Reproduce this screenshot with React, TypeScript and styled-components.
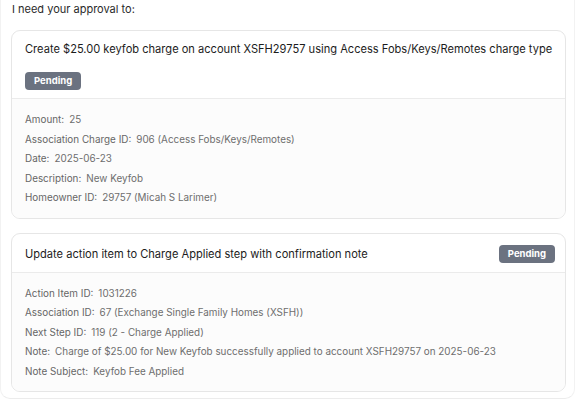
import React from "react";
import styled, { createGlobalStyle } from "styled-components";

const Global = createGlobalStyle`
  html, body { margin: 0; padding: 0; background: #ffffff; }
  body { font-family: Inter, "Noto Sans", sans-serif; color: #1f1f1f; }
`;

const Bubble = styled.div`
  box-sizing: border-box;
  width: 575px;
  height: 399px;
  padding: 1px 10px 0 10px;
  border-bottom: 1px solid #ececec;
  border-left: 1px solid #f2f2f2;
  border-right: 1px solid #f2f2f2;
  border-radius: 0 0 10px 10px;
`;

const Intro = styled.p`
  margin: 0 0 13px 1px;
  font-size: 11px;
  line-height: 16px;
  color: #2a2a2a;
`;

const List = styled.div`
  display: flex;
  flex-direction: column;
  gap: 14px;
`;

const Card = styled.div`
  box-sizing: border-box;
  width: 555px;
  border: 1px solid #e6e6e6;
  border-radius: 9px;
  overflow: hidden;
  background: #ffffff;
`;

const Header = styled.div<{ $stacked?: boolean }>`
  display: flex;
  flex-direction: ${(p) => (p.$stacked ? "column" : "row")};
  align-items: ${(p) => (p.$stacked ? "flex-start" : "center")};
  justify-content: space-between;
  gap: ${(p) => (p.$stacked ? "15px" : "12px")};
  padding: ${(p) => (p.$stacked ? "10px 8px 8px 13px" : "11px 10px 9px 13px")};
  border-bottom: 1px solid #ebebeb;
`;

const Title = styled.div`
  font-size: 11.1px;
  line-height: 16px;
  color: #1c1c1c;
  white-space: nowrap;
`;

const Badge = styled.span`
  display: inline-flex;
  align-items: center;
  box-sizing: border-box;
  height: 18px;
  padding: 0 9px;
  border-radius: 4px;
  background: #6b7280;
  color: #ffffff;
  font-size: 9.5px;
  font-weight: 700;
  line-height: 18px;
`;

const Details = styled.div`
  display: flex;
  flex-direction: column;
  padding: 11px 12px 10px 13px;
  background: #fcfcfc;
`;

const Row = styled.div`
  font-size: 9.9px;
  line-height: 19.5px;
  color: #6e6e6e;
  white-space: nowrap;
`;

const Label = styled.span`
  color: #666666;
  margin-right: 5px;
`;

type Field = [string, string];

const items: { title: string; stacked: boolean; fields: Field[] }[] = [
  {
    title:
      "Create $25.00 keyfob charge on account XSFH29757 using Access Fobs/Keys/Remotes charge type",
    stacked: true,
    fields: [
      ["Amount:", "25"],
      ["Association Charge ID:", "906 (Access Fobs/Keys/Remotes)"],
      ["Date:", "2025-06-23"],
      ["Description:", "New Keyfob"],
      ["Homeowner ID:", "29757 (Micah S Larimer)"],
    ],
  },
  {
    title: "Update action item to Charge Applied step with confirmation note",
    stacked: false,
    fields: [
      ["Action Item ID:", "1031226"],
      ["Association ID:", "67 (Exchange Single Family Homes (XSFH))"],
      ["Next Step ID:", "119 (2 - Charge Applied)"],
      [
        "Note:",
        "Charge of $25.00 for New Keyfob successfully applied to account XSFH29757 on 2025-06-23",
      ],
      ["Note Subject:", "Keyfob Fee Applied"],
    ],
  },
];

export default function App() {
  return (
    <>
      <Global />
      <Bubble>
        <Intro>I need your approval to:</Intro>
        <List>
          {items.map((it) => (
            <Card key={it.title}>
              <Header $stacked={it.stacked}>
                <Title>{it.title}</Title>
                <Badge>Pending</Badge>
              </Header>
              <Details>
                {it.fields.map(([k, v]) => (
                  <Row key={k}>
                    <Label>{k}</Label>
                    {v}
                  </Row>
                ))}
              </Details>
            </Card>
          ))}
        </List>
      </Bubble>
    </>
  );
}
